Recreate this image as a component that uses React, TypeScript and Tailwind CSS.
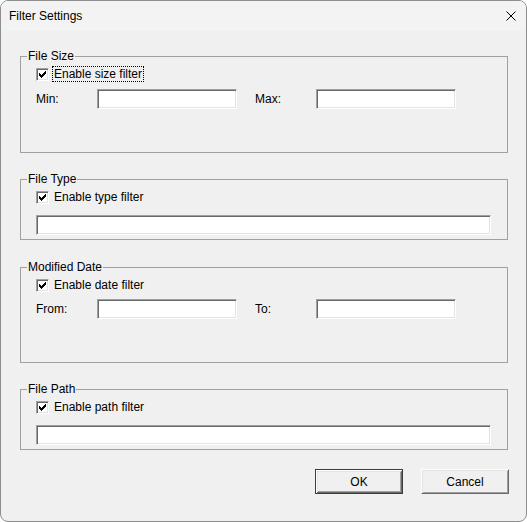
import React from "react";

function Sunken({ className }: { className: string }) {
  return (
    <div
      className={`bg-white border border-t-[#a0a0a0] border-l-[#a0a0a0] border-b-white border-r-white shadow-[inset_1px_1px_0_#696969,inset_-1px_-1px_0_#e3e3e3] ${className}`}
    />
  );
}

function Check({ label, focused }: { label: string; focused?: boolean }) {
  return (
    <div className="flex items-center h-[16px]">
      <div className="relative w-[13px] h-[13px] bg-white border border-t-[#a0a0a0] border-l-[#a0a0a0] border-b-white border-r-white shadow-[inset_1px_1px_0_#696969,inset_-1px_-1px_0_#e3e3e3]">
        <svg width="13" height="13" viewBox="0 0 13 13" className="absolute left-[-1px] top-[-1px]" shapeRendering="crispEdges">
          <path d="M3 5 L5 7 L10 2 L10 5 L5 10 L3 8 Z" fill="#000" />
        </svg>
      </div>
      <span
        className={`ml-[3px] px-[1px] leading-[14px] border ${focused ? "border-dotted border-black" : "border-transparent"}`}
      >
        {label}
      </span>
    </div>
  );
}

function Group({ title, h, children }: { title: string; h: string; children: React.ReactNode }) {
  return (
    <fieldset className={`w-[488px] border border-[#a0a0a0] ${h}`}>
      <legend className="ml-[6px] px-[1px] leading-[14px]">{title}</legend>
      <div className="pl-[15px] pt-[3px]">{children}</div>
    </fieldset>
  );
}

function PairRow({ a, b, mt }: { a: string; b: string; mt: string }) {
  return (
    <div className={`flex items-center ${mt}`}>
      <span className="w-[61px]">{a}</span>
      <Sunken className="w-[140px] h-[20px]" />
      <span className="ml-[18px] w-[61px]">{b}</span>
      <Sunken className="w-[140px] h-[20px]" />
    </div>
  );
}

export default function App() {
  return (
    <div className="w-[527px] h-[522px] bg-white font-['Liberation_Sans',Arial,sans-serif] text-[12px] text-black">
      <div className="w-[527px] h-[522px] border border-[#8e8e8e] rounded-[8px] overflow-hidden bg-[#f0f0f0] flex flex-col">
        <div className="h-[30px] bg-[#f3f3f3] flex items-center justify-between pl-[8px] pr-[10px] shrink-0">
          <span>Filter Settings</span>
          <svg width="10" height="10" viewBox="0 0 10 10">
            <path d="M0.5 0.5 L9.5 9.5 M9.5 0.5 L0.5 9.5" stroke="#000" strokeWidth="1" />
          </svg>
        </div>
        <div className="flex flex-col pl-[19px] pt-[18px]">
          <Group title="File Size" h="h-[104px]">
            <Check label="Enable size filter" focused />
            <PairRow a="Min:" b="Max:" mt="mt-[7px]" />
          </Group>
          <div className="mt-[19px]">
            <Group title="File Type" h="h-[68px]">
              <Check label="Enable type filter" />
              <Sunken className="mt-[10px] w-[455px] h-[20px]" />
            </Group>
          </div>
          <div className="mt-[20px]">
            <Group title="Modified Date" h="h-[103px]">
              <Check label="Enable date filter" />
              <PairRow a="From:" b="To:" mt="mt-[6px]" />
            </Group>
          </div>
          <div className="mt-[19px]">
            <Group title="File Path" h="h-[68px]">
              <Check label="Enable path filter" />
              <Sunken className="mt-[10px] w-[455px] h-[20px]" />
            </Group>
          </div>
          <div className="flex justify-end pr-[17px] mt-[19px] gap-[18px]">
            <button className="w-[88px] h-[25px] bg-[#f0f0f0] border border-[#3c3c3c] shadow-[inset_1px_1px_0_#fff,inset_-1px_-1px_0_#696969,inset_2px_2px_0_#e3e3e3,inset_-2px_-2px_0_#a0a0a0]">
              OK
            </button>
            <button className="w-[88px] h-[25px] bg-[#f0f0f0] border border-t-white border-l-white border-b-[#696969] border-r-[#696969] shadow-[inset_1px_1px_0_#e3e3e3,inset_-1px_-1px_0_#a0a0a0]">
              Cancel
            </button>
          </div>
        </div>
      </div>
    </div>
  );
}
